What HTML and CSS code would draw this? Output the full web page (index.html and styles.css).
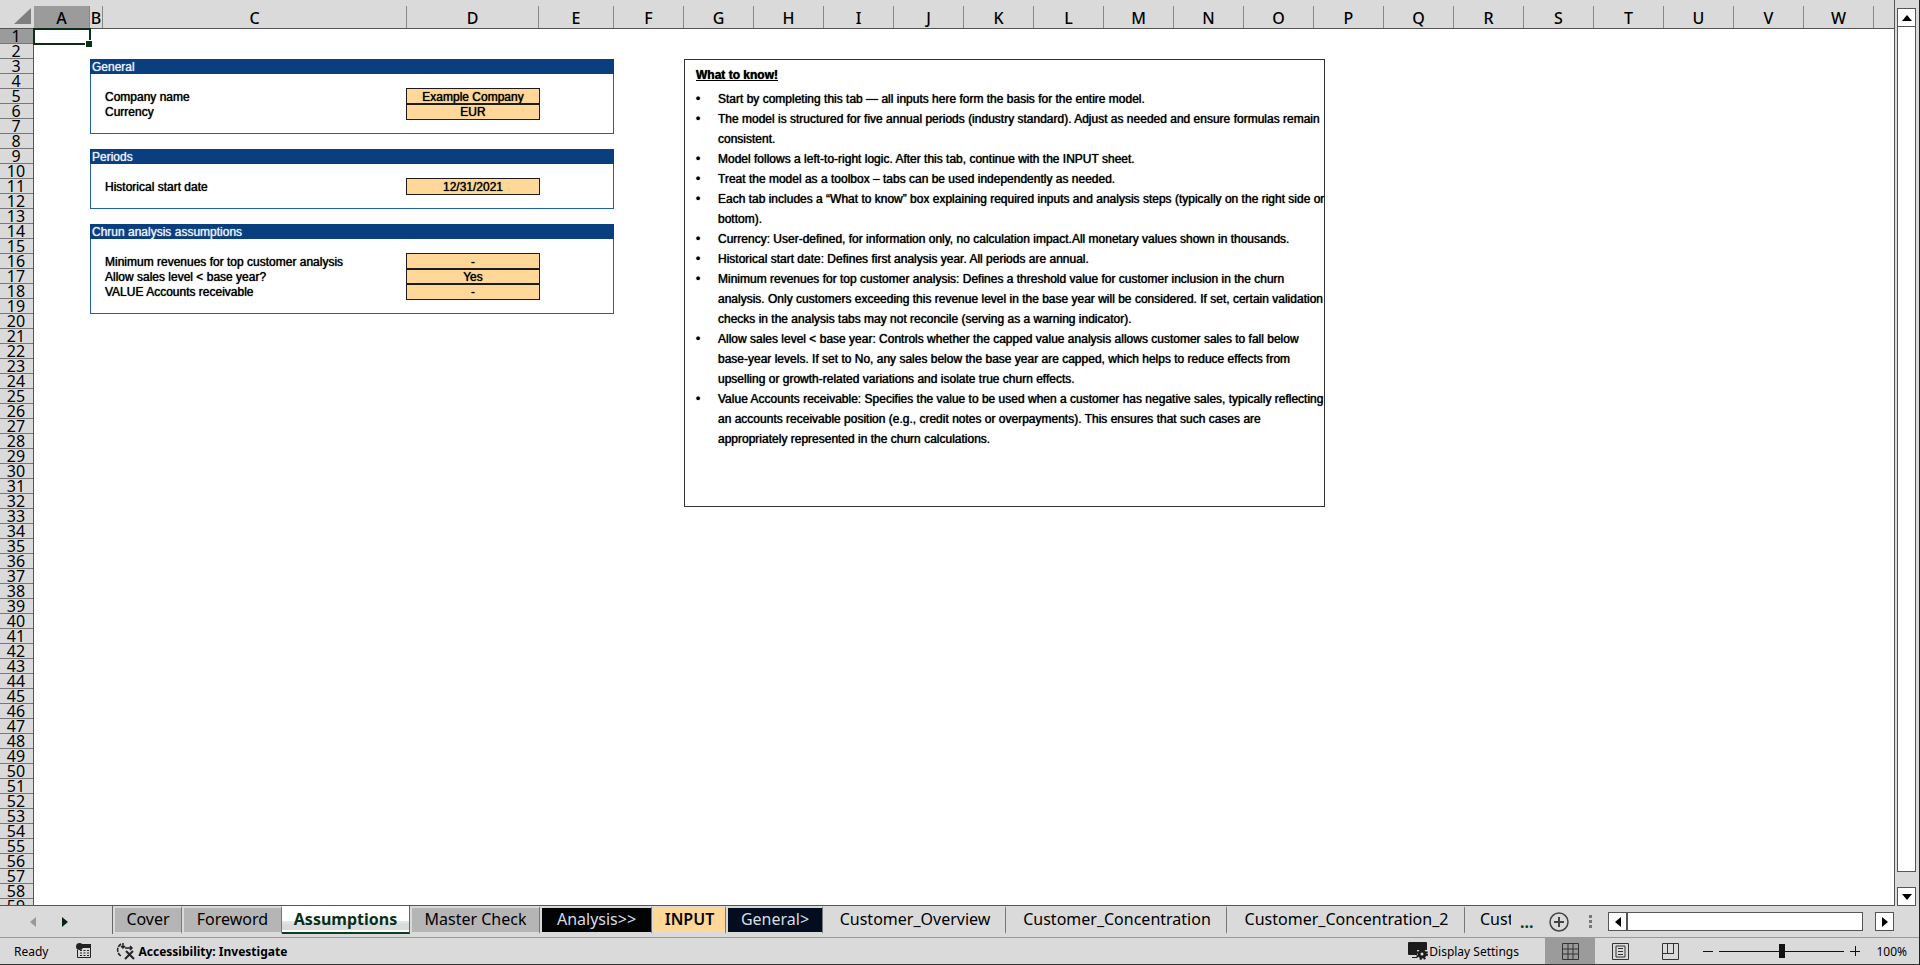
FILE: index.html
```html
<!DOCTYPE html>
<html lang="en">
<head>
    <meta charset="UTF-8">
    <meta name="viewport" content="width=device-width, initial-scale=1.0">
    <title>Assumptions</title>
    <link rel="stylesheet" href="styles.css">
</head>
<body>
    <main class="workspace">
        <div class="sheet">
            <table class="grid">
                <colgroup id="grid-cols"></colgroup>
                <thead>
                    <tr id="grid-head"></tr>
                </thead>
                <tbody id="grid-body"></tbody>
            </table>
            <section class="info-box">
                <h2>What to know!</h2>
                <ul>
                    <li>Start by completing this tab — all inputs here form the basis for the entire model.</li>
                    <li>The model is structured for five annual periods (industry standard). Adjust as needed and ensure formulas remain<br>consistent.</li>
                    <li>Model follows a left-to-right logic. After this tab, continue with the INPUT sheet.</li>
                    <li>Treat the model as a toolbox – tabs can be used independently as needed.</li>
                    <li>Each tab includes a “What to know” box explaining required inputs and analysis steps (typically on the right side or<br>bottom).</li>
                    <li>Currency: User-defined, for information only, no calculation impact.All monetary values shown in thousands.</li>
                    <li>Historical start date: Defines first analysis year. All periods are annual.</li>
                    <li>Minimum revenues for top customer analysis: Defines a threshold value for customer inclusion in the churn<br>analysis. Only customers exceeding this revenue level in the base year will be considered. If set, certain validation<br>checks in the analysis tabs may not reconcile (serving as a warning indicator).</li>
                    <li>Allow sales level &lt; base year: Controls whether the capped value analysis allows customer sales to fall below<br>base-year levels. If set to No, any sales below the base year are capped, which helps to reduce effects from<br>upselling or growth-related variations and isolate true churn effects.</li>
                    <li>Value Accounts receivable: Specifies the value to be used when a customer has negative sales, typically reflecting<br>an accounts receivable position (e.g., credit notes or overpayments). This ensures that such cases are<br>appropriately represented in the churn calculations.</li>
                </ul>
            </section>
        </div>
        <div class="v-scroll">
            <button class="scroll-button" aria-label="Scroll up"><svg width="10" height="6"><path d="M0 6L5 0l5 6z"/></svg></button>
            <div class="v-thumb"></div>
            <button class="scroll-button" aria-label="Scroll down"><svg width="10" height="6"><path d="M0 0h10L5 6z"/></svg></button>
        </div>
    </main>

    <nav class="tab-bar">
        <div class="tab-arrows">
            <button class="plain-button" aria-label="Previous sheet"><svg width="6" height="10" fill="#999"><path d="M6 0v10L0 5z"/></svg></button>
            <button class="plain-button" aria-label="Next sheet"><svg width="6" height="10" fill="#06240f"><path d="M0 0v10l6-5z"/></svg></button>
        </div>
        <div class="tabs">
            <button class="tab gray tab-cover">Cover</button>
            <button class="tab gray tab-foreword">Foreword</button>
            <button class="tab active">Assumptions</button>
            <button class="tab gray tab-master">Master Check</button>
            <button class="tab black tab-analysis">Analysis&gt;&gt;</button>
            <button class="tab orange tab-input">INPUT</button>
            <button class="tab navy tab-general">General&gt;</button>
            <button class="tab tab-overview">Customer_Overview</button>
            <button class="tab tab-concentration">Customer_Concentration</button>
            <button class="tab tab-concentration-2">Customer_Concentration_2</button>
            <button class="tab tab-cut">Cust</button>
        </div>
        <button class="plain-button more">...</button>
        <button class="plain-button" aria-label="New sheet">
            <svg width="20" height="20" fill="none" stroke="#444"><circle cx="10" cy="10" r="9" stroke-width="1.5"/><path d="M10 5v10M5 10h10" stroke-width="2"/></svg>
        </button>
        <svg class="grip" width="4" height="14" fill="#777"><path d="M0 0h3v3H0zM0 5h3v3H0zM0 10h3v3H0z"/></svg>
        <div class="h-scroll">
            <button class="scroll-button" aria-label="Scroll left"><svg width="6" height="10"><path d="M6 0v10L0 5z"/></svg></button>
            <div class="h-thumb"></div>
            <button class="scroll-button" aria-label="Scroll right"><svg width="6" height="10"><path d="M0 0v10l6-5z"/></svg></button>
        </div>
    </nav>

    <footer class="status-bar">
        <span class="ready">Ready</span>
        <button class="plain-button macro" aria-label="Record macro">
            <svg width="16" height="16"><path d="M5 1h10v4H5z" fill="#222"/><path d="M1.500 7v7.500h13V4" fill="none" stroke="#222"/><circle cx="3.500" cy="3.500" r="3.500" fill="#222"/><path d="M4 7.500h2M7.500 7.500h2M11 7.500h2M4 10h2M7.500 10h2M11 10h2M4 12.500h2M7.500 12.500h2M11 12.500h2" stroke="#222"/></svg>
        </button>
        <button class="plain-button accessibility">
            <svg width="20" height="18" fill="none" stroke="#222" stroke-width="1.500"><path d="M5 2a7 7 0 0 0 0 12" stroke-dasharray="4 1"/><path d="M7 1v5M5 4l2 2 2-2M9 6h7M14 4l2 2-2 2"/><path d="M10 9l8 8M17 9l-8 8" stroke-width="2"/></svg>
            Accessibility: Investigate
        </button>
        <button class="plain-button display-settings">
            <svg width="20" height="18"><path d="M1 0h17a1 1 0 0 1 1 1v7H9v5H1a1 1 0 0 1-1-1V1a1 1 0 0 1 1-1zM4 15h5v1H4z" fill="#1c1c1c"/><circle cx="14" cy="12" r="3" fill="none" stroke="#1c1c1c" stroke-width="3"/><circle cx="14" cy="12" r="5" fill="none" stroke="#1c1c1c" stroke-width="2" stroke-dasharray="2 2"/></svg>
            Display Settings
        </button>
        <div class="views">
            <button class="view selected" aria-label="Normal"><svg width="17" height="17"><path d="M.5.500h16v16H.5zM6 0v17M11 0v17M0 6h17M0 11h17"/></svg></button>
            <button class="view" aria-label="Page layout"><svg width="17" height="17"><path d="M.5.500h16v16H.5zM4 3h9v11H4zM6 5.500h5M6 8.500h5M6 11.500h5"/></svg></button>
            <button class="view" aria-label="Page break preview"><svg width="17" height="17"><path d="M.5.500h16v16H.5zM5.500 0v10M11.500 0v10M0 10.500h12"/></svg></button>
        </div>
        <button class="plain-button" aria-label="Zoom out"><svg width="10" height="10" stroke="#111"><path d="M0 5.500h10"/></svg></button>
        <input class="zoom" type="range" min="0" max="200" value="100" aria-label="Zoom">
        <button class="plain-button" aria-label="Zoom in"><svg width="10" height="10" stroke="#111"><path d="M0 5.500h10M5.500 0v10"/></svg></button>
        <span class="percent">100%</span>
    </footer>
    <script src="script.js"></script>
</body>
</html>
```

FILE: styles.css
```css
* {
    box-sizing: border-box;
}

body {
    margin: 0;
    height: 100vh;
    display: flex;
    flex-direction: column;
    overflow: hidden;
    background: #dadada;
    color: #000;
    font-family: "Noto Sans", "Open Sans", sans-serif;
    border-right: 1px solid #222;
    border-bottom: 1px solid #333;
}

button {
    font: inherit;
    color: inherit;
    padding: 0;
}

svg {
    display: block;
    flex: none;
}

/* Sheet */
.workspace {
    flex: 1;
    min-height: 0;
    display: flex;
}

.sheet {
    position: relative;
    flex: 1;
    min-width: 0;
    overflow: hidden;
    border-right: 1px solid #555;
    border-bottom: 1px solid #555;
}

.grid {
    table-layout: fixed;
    width: 100%;
    border-collapse: separate;
    border-spacing: 0;
    background: #fff;
    font: 12px/14px "Liberation Sans", Arial, sans-serif;
}

.grid th,
.grid td {
    padding: 0;
}

.grid thead th {
    height: 29px;
    padding-top: 6px;
    background: #dadada;
    border-bottom: 1px solid #555;
    font: 500 16px/20px "Noto Sans", "Open Sans", sans-serif;
}

.grid thead span {
    display: block;
    padding-top: 2px;
    border-right: 1px solid #888;
}

.grid thead .selected span {
    background: #9b9b9b;
}

.corner svg {
    margin: 0 3px 2px auto;
}

.col-head {
    width: 34px;
}

.col-a {
    width: 56px;
}

.col-b {
    width: 13px;
}

.col-c {
    width: 304px;
}

.col-d {
    width: 132px;
}

.col-e {
    width: 75px;
}

.col {
    width: 70px;
}

.row-head {
    background: #dadada;
    border-right: 1px solid #555;
}

.row-head span {
    display: block;
    height: 15px;
    border-bottom: 1px solid #777;
    padding-right: 1px;
    font: 16px/14px "Noto Sans", "Open Sans", sans-serif;
}

.row-head.selected span {
    background: #9b9b9b;
}

.cursor {
    position: relative;
    outline: 2px solid #0b2f14;
    outline-offset: -1px;
}

.cursor::after {
    content: "";
    position: absolute;
    right: -2px;
    bottom: -3px;
    width: 6px;
    height: 6px;
    background: #0b2f14;
    border: 1px solid #fff;
    border-right: 0;
    border-bottom: 0;
}

.grid .title {
    padding: 1px 0 0 2px;
    background: #0a3f7f;
    color: #e8f0fa;
    text-align: left;
    font-weight: normal;
}

.grid .label {
    padding: 1px 0 0 2px;
}

.grid label {
    display: block;
}

.left {
    box-shadow: inset 1px 0 #1f5fa8;
}

.right {
    box-shadow: inset -1px 0 #1f5fa8;
}

.end {
    box-shadow: inset 0 -1px #1f5fa8;
}

.end.left {
    box-shadow: inset 1px -1px #1f5fa8;
}

.end.right {
    box-shadow: inset -1px -1px #1f5fa8;
}

.cell-input {
    display: block;
    width: 100%;
    height: 15px;
    padding: 1px 0 0;
    border: 0;
    border-radius: 0;
    outline: 1px solid #1c1c1c;
    background: #ffd899;
    color: #000;
    font: inherit;
    text-align: center;
}

.grid .label,
.cell-input,
.grid .title {
    text-shadow: 0 0 1px currentColor;
}

/* Text shape floating over the cells */
.info-box {
    position: absolute;
    left: 684px;
    top: 59px;
    width: 641px;
    height: 448px;
    padding: 5px 11px;
    border: 1px solid #333;
    background: #fff;
    font: 12px/20px "Liberation Sans", Arial, sans-serif;
    text-shadow: 0 0 1px #000;
    white-space: nowrap;
}

.info-box h2 {
    margin: 0 0 4px;
    font-size: 12px;
    line-height: 20px;
    font-weight: bold;
    text-decoration: underline;
}

.info-box ul {
    margin: 0;
    padding: 0;
    list-style: none;
}

.info-box li {
    padding-left: 22px;
}

.info-box li::before {
    content: "•";
    float: left;
    margin-left: -22px;
}

/* Scroll bars */
.scroll-button {
    display: grid;
    place-items: center;
    flex: none;
    width: 19px;
    height: 19px;
    border: 1px solid #555;
    background: #fff;
}

.v-scroll {
    display: flex;
    flex-direction: column;
    width: 24px;
    padding: 8px 3px 0 2px;
}

.v-thumb {
    flex: 1;
    margin-bottom: 15px;
    border: 1px solid #555;
    border-top: 0;
    background: #fff;
}

.h-scroll {
    display: flex;
    width: 286px;
}

.h-thumb {
    flex: 1;
    margin-right: 12px;
    border: 1px solid #555;
    background: #fff;
}

/* Sheet tabs */
.tab-bar {
    display: flex;
    align-items: center;
    flex: none;
    height: 32px;
    padding-right: 25px;
    border-bottom: 1px solid #999;
}

.plain-button {
    display: flex;
    align-items: center;
    flex: none;
    border: 0;
    background: none;
}

.tab-arrows {
    display: flex;
    flex: none;
    width: 112px;
    padding-left: 30px;
    gap: 26px;
}

.tabs {
    display: flex;
    flex: 1;
    align-self: flex-start;
    min-width: 0;
    overflow: hidden;
    border-left: 1px solid #666;
}

.tab {
    flex: none;
    height: 28px;
    padding: 0 0 4px;
    border: 2px solid #dadada;
    border-right: 1px solid #777;
    background: #dadada;
    font-size: 16px;
    line-height: 22px;
    white-space: nowrap;
}

.gray {
    background: #b5b5b5;
}

.black {
    background: #020305;
    color: #d5dde2;
}

.orange {
    background: #ffd899;
    font-weight: 600;
}

.navy {
    background: #020d20;
    color: #d5dde2;
}

.active {
    width: 128px;
    padding: 2px 0 4px;
    border: 0;
    border-right: 1px solid #666;
    border-bottom: 2px solid #0b3f20;
    background: linear-gradient(#fff 15px, #d8eeee 15px, #dadada 19px, #dadada 24px, #fff 24px);
    color: #0b2f14;
    font-weight: bold;
}

.tab-cover {
    width: 69px;
}

.tab-foreword {
    width: 100px;
}

.tab-master {
    width: 130px;
}

.tab-analysis {
    width: 112px;
}

.tab-input {
    width: 74px;
}

.tab-general {
    width: 97px;
}

.tab-overview {
    width: 183px;
}

.tab-concentration {
    width: 221px;
}

.tab-concentration-2 {
    width: 238px;
}

.tab-cut {
    padding-left: 13px;
}

.more {
    width: 38px;
    padding-left: 9px;
    color: #0b3f20;
    font-size: 16px;
    font-weight: bold;
}

.grip {
    margin: 0 15px 0 20px;
}

/* Status bar */
.status-bar {
    display: flex;
    align-items: center;
    flex: none;
    height: 26px;
    padding: 0 12px 0 14px;
    font-size: 12px;
}

.macro {
    margin: 0 24px 0 28px;
}

.accessibility {
    gap: 2px;
    font-weight: bold;
}

.display-settings {
    margin-left: auto;
    gap: 1px;
}

.views {
    display: flex;
    align-self: stretch;
    margin: 0 8px 0 26px;
}

.view {
    display: grid;
    place-items: center;
    width: 50px;
    border: 0;
    background: none;
    fill: none;
    stroke: #333;
}

.view.selected {
    background: #9b9b9b;
}

.zoom {
    appearance: none;
    width: 125px;
    height: 14px;
    margin: 0 6px;
    background: linear-gradient(#111, #111) center / 100% 1px no-repeat;
}

.zoom::-webkit-slider-thumb {
    appearance: none;
    width: 6px;
    height: 14px;
    background: #111;
}

.percent {
    width: 47px;
    text-align: right;
}
```

FILE: script.js
```js
const columns = 'ABCDEFGHIJKLMNOPQRSTUVW'.split('');
const rowCount = 59;

// Each panel covers columns B to E, the title sits in its first row
const panels = [
    { title: 'General', start: 3, end: 7 },
    { title: 'Periods', start: 9, end: 12 },
    { title: 'Chrun analysis assumptions', start: 14, end: 19 }
];

const inputs = {
    5: ['Company name', 'Example Company'],
    6: ['Currency', 'EUR'],
    11: ['Historical start date', '12/31/2021'],
    16: ['Minimum revenues for top customer analysis', '-'],
    17: ['Allow sales level < base year?', 'Yes'],
    18: ['VALUE Accounts receivable', '-']
};

function addCell(row, tag, className, span) {
    const cell = document.createElement(tag);
    cell.className = className || '';
    cell.colSpan = span || 1;
    row.appendChild(cell);
    return cell;
}

function addHeading(row, className, text) {
    const cell = addCell(row, 'th', className);
    const label = document.createElement('span');
    label.textContent = text;
    cell.appendChild(label);
}

function buildHead() {
    const cols = document.getElementById('grid-cols');
    const head = document.getElementById('grid-head');
    const names = ['col-head', 'col-a', 'col-b', 'col-c', 'col-d', 'col-e'];

    for (let i = 0; i < columns.length + 2; i++) {
        const col = document.createElement('col');
        if (i <= columns.length) {
            col.className = names[i] || 'col';
        }
        cols.appendChild(col);
    }

    addCell(head, 'th', 'corner').innerHTML =
        '<svg width="17" height="16" fill="#7f7f7f"><path d="M17 0v16H0z"/></svg>';
    columns.forEach((name) => addHeading(head, name === 'A' ? 'selected' : '', name));
    addCell(head, 'th');
}

function buildRow(number) {
    const row = document.createElement('tr');
    addHeading(row, number === 1 ? 'row-head selected' : 'row-head', number);
    addCell(row, 'td', number === 1 ? 'cursor' : '');

    const panel = panels.find((p) => number >= p.start && number <= p.end);
    if (!panel) {
        addCell(row, 'td', '', 4);
    } else if (number === panel.start) {
        addCell(row, 'th', 'title', 4).textContent = panel.title;
    } else {
        const end = number === panel.end ? 'end ' : '';
        addCell(row, 'td', end + 'left');
        const labelCell = addCell(row, 'td', end + 'label');
        const valueCell = addCell(row, 'td', end);
        addCell(row, 'td', end + 'right');

        if (inputs[number]) {
            const label = document.createElement('label');
            label.htmlFor = 'd' + number;
            label.textContent = inputs[number][0];
            labelCell.appendChild(label);

            const input = document.createElement('input');
            input.id = 'd' + number;
            input.className = 'cell-input';
            input.value = inputs[number][1];
            valueCell.appendChild(input);
        }
    }

    addCell(row, 'td', '', 19);
    return row;
}

buildHead();
for (let i = 1; i <= rowCount; i++) {
    document.getElementById('grid-body').appendChild(buildRow(i));
}
```
